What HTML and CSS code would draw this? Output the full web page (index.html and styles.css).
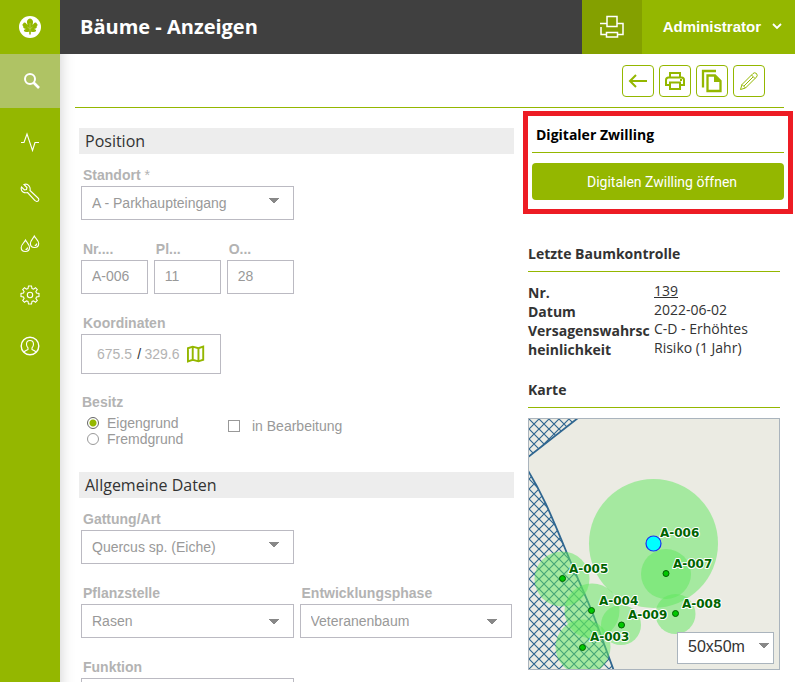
FILE: index.html
```html
<!DOCTYPE html>
<html lang="de">
<head>
<meta charset="utf-8">
<title>Bäume - Anzeigen</title>
<link rel="stylesheet" href="styles.css">
</head>
<body>
<nav class="sidebar" aria-label="Hauptmenü">
  <a class="logo" href="#" aria-label="Startseite">
    <svg width="22" height="22" viewBox="0 0 22 22"><circle cx="11" cy="11" r="11" fill="#fff"/><path d="M11 2.500 C13 3 14.300 4.500 14 6.500 L13.500 9 C14.500 8 15 6.500 16.500 6.500 C18 6.800 17.500 8 18.700 8.700 C18.500 10 17.300 10 17.800 11.200 C17.500 12.700 16 12.500 15 13 C16.300 13.200 17.500 14 17 15 C16 16.200 13.500 16.500 11.800 15.500 V18.500 H10.200 V15.500 C8.500 16.500 6 16.200 5 15 C4.500 14 5.700 13.200 7 13 C6 12.500 4.500 12.700 4.200 11.200 C4.700 10 3.500 10 3.300 8.700 C4.500 8 4 6.800 5.500 6.500 C7 6.500 7.500 8 8.500 9 L8 6.500 C7.700 4.500 9 3 11 2.500 Z" fill="#94b700"/><path d="M11 7 V15 M11 13 L8.500 11 M11 13 L13.500 11" stroke="#b6cf55" stroke-width=".8" fill="none"/></svg>
  </a>
  <a class="search" href="#" aria-label="Suche">
    <svg width="18" height="18" viewBox="0 0 18 18" fill="none" stroke="#fff"><circle cx="7" cy="7" r="5" stroke-width="2"/><path d="M10.500 10.500 L16 16" stroke-width="2.600"/></svg>
  </a>
  <a class="item" href="#" aria-label="Aktivität">
    <svg width="20" height="20" viewBox="0 0 20 20"><path d="M1 10.500 H4 L7 2 L12.500 18.500 L15 10.500 H19"/></svg>
  </a>
  <a class="item" href="#" aria-label="Werkzeuge">
    <svg width="20" height="20" viewBox="0 0 20 20"><path d="M4 1.500 L7 4.500 L6.500 6.500 L4.500 7 L1.500 4 C.800 6 1.500 8 3 9 C4.500 10 6 10 7.500 9.500 L15 17.500 C16 18.700 17.500 18.700 18.300 17.800 C19 17 19 15.800 18 15 L10 7.500 C10.500 5.500 10 4 9 2.800 C7.800 1.300 5.800 .800 4 1.500 Z"/></svg>
  </a>
  <a class="item" href="#" aria-label="Bewässerung">
    <svg width="20" height="20" viewBox="0 0 20 20"><path d="M5.500 6 C7 9 9.500 10.500 9.500 13.500 C9.500 16 7.500 17.500 5.300 17.500 C3 17.500 1.200 16 1.200 13.500 C1.200 10.500 4 9 5.500 6 Z M14.300 2 C16 5 18.700 6.500 18.700 9.500 C18.700 12 16.700 13.500 14.500 13.500 C12.200 13.500 10.400 12 10.400 9.500 C10.400 6.500 12.800 5 14.300 2 Z M5.500 15.500 C6.800 15.500 7.500 14.800 7.500 13.500 M14.700 11.500 C16 11.500 16.700 10.800 16.700 9.500"/></svg>
  </a>
  <a class="item" href="#" aria-label="Einstellungen">
    <svg width="20" height="20" viewBox="0 0 20 20"><circle cx="10" cy="10" r="2.700"/><path d="M8.500 1 H11.500 L12 3.500 L13.500 4.200 L15.500 2.700 L17.300 4.500 L15.900 6.500 L16.500 8 L19 8.500 V11.500 L16.500 12 L15.900 13.500 L17.300 15.500 L15.500 17.300 L13.500 15.900 L12 16.500 L11.500 19 H8.500 L8 16.500 L6.500 15.900 L4.500 17.300 L2.700 15.500 L4.100 13.500 L3.500 12 L1 11.500 V8.500 L3.500 8 L4.100 6.500 L2.700 4.500 L4.500 2.700 L6.500 4.100 L8 3.500 Z"/></svg>
  </a>
  <a class="item" href="#" aria-label="Profil">
    <svg width="20" height="20" viewBox="0 0 20 20"><circle cx="10" cy="10" r="8.800" stroke-width="1.400"/><path d="M10 4.500 C7.700 4.500 6.500 6 6.500 8.300 C6.500 10 7.200 11.200 8 12 V13.500 C6.500 14.200 5 14.500 4 16 M10 4.500 C12.300 4.500 13.500 6 13.500 8.300 C13.500 10 12.800 11.200 12 12 V13.500 C13.500 14.200 15 14.500 16 16"/></svg>
  </a>
</nav>

<div class="page">
  <header class="topbar">
    <h1>Bäume - Anzeigen</h1>
    <button class="top-print" type="button" aria-label="Drucken">
      <svg width="24" height="24" viewBox="0 0 24 24" fill="none" stroke="#fff" stroke-width="1.500"><path d="M7 11.500 V1.500 H17 V11.500 Z M7 8.500 H0 M17 8.500 H23 V19.500 H18 M1 12 V19.500 H6 M6.500 17.500 H17.500 V22 H6.500 Z"/></svg>
    </button>
    <button class="user" type="button">Administrator
      <svg width="10" height="7" viewBox="0 0 10 7" fill="none" stroke="#fff" stroke-width="1.800"><path d="M1 1 L5 5 L9 1"/></svg>
    </button>
  </header>

  <main>
    <div class="toolbar">
      <button type="button" aria-label="Zurück"><svg width="20" height="20" viewBox="0 0 20 20" fill="none" stroke="#94b700" stroke-width="2"><path d="M19 10 H2 M8 4 L2 10 L8 16"/></svg></button>
      <button type="button" aria-label="Drucken"><svg width="22" height="20" viewBox="0 0 22 20" fill="none" stroke="#94b700" stroke-width="2"><path d="M6 6 V2 H16 V6 M6 14 H2 V9 Q2 6.500 4.500 6.500 H17.500 Q20 6.500 20 9 V14 H16 M6 11.500 H16 V18 H6 Z"/><path d="M16 9 H18"/></svg></button>
      <button type="button" aria-label="Kopieren"><svg width="22" height="24" viewBox="0 0 22 24" fill="none" stroke="#94b700" stroke-width="2.300"><path d="M2 18.500 V2 H15"/><path d="M6.500 6.500 H14 L19.500 12 V22 H6.500 Z"/><path d="M13 6 V13 H20 Z" fill="#94b700" stroke="none"/></svg></button>
      <button type="button" aria-label="Bearbeiten"><svg width="20" height="20" viewBox="0 0 20 20" fill="none" stroke="#94b700"><path d="M1.500 18.500 L3 13.500 L14 2.500 Q15.500 1 17.500 2.500 Q19 4.500 17.500 6 L6.500 17 Z M3 13.500 L6.500 17 M12.500 4 L16 7.500 M5 15 L14 6"/></svg></button>
    </div>

    <div class="columns">
      <form class="form">
        <h2>Position</h2>
        <div class="fields">
          <div class="field first">
            <label for="standort">Standort <span class="star">*</span></label>
            <select id="standort" class="box up" disabled><option>A - Parkhaupteingang</option></select>
          </div>
          <div class="triple">
            <div class="field"><label for="nr">Nr....</label><input id="nr" class="box" value="A-006" disabled></div>
            <div class="field"><label for="pl">Pl...</label><input id="pl" class="box" value="11" disabled></div>
            <div class="field"><label for="o">O...</label><input id="o" class="box" value="28" disabled></div>
          </div>
          <div class="triple">
            <div class="field wide">
              <label for="koord-x">Koordinaten</label>
              <div class="coords">
                <input id="koord-x" value="675.5" disabled><span>/</span><input aria-label="Koordinate Y" value="329.6" disabled>
                <svg width="18" height="18" viewBox="0 0 18 18" fill="none" stroke="#94b700" stroke-width="2"><path d="M1 3 L6 1.300 L12 3 L17 1.300 V15 L12 16.700 L6 15 L1 16.700 Z M6 1.300 V15 M12 3 V16.700"/></svg>
              </div>
            </div>
          </div>
          <fieldset class="owner">
            <legend>Besitz</legend>
            <div class="radios">
              <label><input type="radio" name="besitz" checked>Eigengrund</label>
              <label><input type="radio" name="besitz">Fremdgrund</label>
            </div>
            <label class="check"><input type="checkbox">in Bearbeitung</label>
          </fieldset>
        </div>

        <h2>Allgemeine Daten</h2>
        <div class="fields">
          <div class="field first">
            <label for="gattung">Gattung/Art</label>
            <select id="gattung" class="box up" disabled><option>Quercus sp. (Eiche)</option></select>
          </div>
          <div class="field start">
            <label for="pflanz">Pflanzstelle</label>
            <select id="pflanz" class="box" disabled><option>Rasen</option></select>
          </div>
          <div class="field">
            <label for="phase">Entwicklungsphase</label>
            <select id="phase" class="box" disabled><option>Veteranenbaum</option></select>
          </div>
          <div class="field start">
            <label for="funktion">Funktion</label>
            <select id="funktion" class="box" disabled><option></option></select>
          </div>
        </div>
      </form>

      <aside>
        <section class="twin">
          <h3>Digitaler Zwilling</h3>
          <button type="button">Digitalen Zwilling öffnen</button>
        </section>
        <section class="panel">
          <h3>Letzte Baumkontrolle</h3>
          <div class="facts">
            <div class="names"><div>Nr.</div><div>Datum</div><div>Versagenswahrscheinlichkeit</div></div>
            <div class="values"><div><a href="#">139</a></div><div>2022-06-02</div><div>C-D - Erhöhtes Risiko (1 Jahr)</div></div>
          </div>
        </section>
        <section class="panel">
          <h3>Karte</h3>
          <div class="map">
            <svg viewBox="0 0 250 250" role="img" aria-label="Karte der Bäume">
              <defs>
                <pattern id="hatch" width="10" height="10" patternUnits="userSpaceOnUse"><path d="M-1 -1 L11 11 M-1 11 L11 -1" stroke="#2f6690" stroke-width="1.200"/></pattern>
              </defs>
              <rect width="250" height="250" fill="#ebebe3"/>
              <g fill="url(#hatch)" stroke="#2f6690" stroke-width="1.800">
                <path d="M-2 -1 H49 L-2 39 Z"/>
                <path d="M-2 50 C14 76 22 96 35 127 C46 154 56 175 64 195 L85 252 H-2 Z"/>
              </g>
              <g fill="#5fe75d" fill-opacity=".5">
                <circle cx="124.500" cy="124.500" r="64.500"/><circle cx="137" cy="155" r="25"/><circle cx="33" cy="160" r="27.500"/>
                <circle cx="63" cy="192" r="27.500"/><circle cx="54" cy="228" r="27.500"/><circle cx="92" cy="206" r="20"/><circle cx="146.500" cy="195" r="20"/>
              </g>
              <g fill="#00c800" stroke="#006000">
                <circle cx="137" cy="154.500" r="3"/><circle cx="33.500" cy="159.500" r="3"/><circle cx="62.500" cy="191.500" r="3"/>
                <circle cx="53.500" cy="228.500" r="3"/><circle cx="92.500" cy="206" r="3"/><circle cx="146.500" cy="194.500" r="3"/>
              </g>
              <circle cx="124.500" cy="124.500" r="7.500" fill="#00ffff" stroke="#1a2ff0" stroke-width="1.200"/>
              <g class="tags">
                <text x="131" y="118">A-006</text><text x="144" y="149">A-007</text><text x="40" y="154">A-005</text>
                <text x="70" y="186">A-004</text><text x="99" y="200">A-009</text><text x="153" y="189">A-008</text><text x="61" y="222">A-003</text>
              </g>
            </svg>
            <select class="scale" aria-label="Kartenausschnitt"><option>50x50m</option></select>
          </div>
        </section>
      </aside>
    </div>
  </main>
</div>
</body>
</html>
```
FILE: styles.css
```css
* { box-sizing: border-box; }

body {
  margin: 0;
  height: 100vh;
  overflow: hidden;
  display: grid;
  grid-template-columns: 60px 1fr;
  background: #fff;
  color: #333;
  font-family: "Open Sans", sans-serif;
}

h1, h2, h3 { margin: 0; }
button, input, select { font: inherit; margin: 0; }
button { cursor: pointer; }

.sidebar {
  background: #94b700;
  box-shadow: 0 0 14px rgba(0, 0, 0, .2);
}
.sidebar a { display: flex; align-items: center; justify-content: center; }
.sidebar .logo, .sidebar .search { height: 54px; }
.sidebar .search { background: #afc364; margin-bottom: 8px; padding-left: 4px; }
.sidebar .item { height: 51px; }
.item svg { fill: none; stroke: #fff; stroke-width: 1.100; }

.page { min-width: 0; }

.topbar {
  position: relative;
  display: flex;
  height: 54px;
  background: #404040;
}
.topbar h1 {
  flex: 1;
  padding-left: 20px;
  color: #fff;
  font-size: 20px;
  line-height: 54px;
}
.topbar button { border: 0; padding: 0; color: #fff; }
.top-print { width: 60px; background: #84a000; display: grid; place-items: center; }
.topbar .user {
  display: flex;
  align-items: center;
  gap: 11px;
  padding: 0 13px 2px 21px;
  background: #94b700;
  font: bold 15px "Liberation Sans", sans-serif;
}

.toolbar {
  display: flex;
  justify-content: flex-end;
  gap: 5px;
  margin: 0 11px 0 15px;
  padding: 11px 19px 10px 0;
  border-bottom: 1px solid #94b700;
}
.toolbar button {
  display: grid;
  place-items: center;
  width: 32px;
  height: 32px;
  padding: 0;
  border: 1px solid #94b700;
  border-radius: 4px;
  background: #fff;
}

.columns {
  display: grid;
  grid-template-columns: 1fr 270px;
  gap: 9px;
  padding: 3px 2px 0 19px;
}

.form {
  padding-top: 17px;
  font: 14px/16px "Liberation Sans", sans-serif;
  color: #999;
}
.form h2 {
  height: 26px;
  padding-left: 6px;
  background: #ededed;
  color: #333;
  font: 16px/26px "Open Sans", sans-serif;
}
.fields {
  display: grid;
  grid-template-columns: 1fr 1fr;
  column-gap: 6px;
  padding: 0 2px;
}
.field { min-width: 0; padding-top: 21px; }
.field.first { padding-top: 13px; }
.field.first, .field.start, .triple { grid-column: 1; }
.field > label, .owner legend {
  display: block;
  padding: 0 0 3px 2px;
  color: #b3b3b3;
  font-weight: bold;
  white-space: nowrap;
}
.star { font-weight: normal; }
.triple { display: grid; grid-template-columns: repeat(3, 1fr); gap: 6px; }
.wide { grid-column: span 2; }

.box {
  display: block;
  width: 100%;
  height: 34px;
  padding: 0 10px;
  border: 1px solid #bbbac2;
  border-radius: 0;
  background: #fff;
  color: #999;
  opacity: 1;
}
input.box { padding-bottom: 2px; }
select { appearance: none; }

.coords {
  display: flex;
  align-items: center;
  height: 40px;
  padding: 0 15px 1px;
  border: 1px solid #bbbac2;
}
.coords input {
  width: 37px;
  padding: 0;
  border: 0;
  background: none;
  color: #b3b3b3;
}
.coords span { width: 11px; color: #333; text-align: center; }
.coords svg { margin-left: 6px; }

.owner {
  grid-column: 1 / -1;
  display: grid;
  grid-template-columns: 147px 1fr;
  align-items: start;
  margin: 0 0 25px;
  padding: 0;
  border: 0;
}
.owner legend { padding: 20px 0 5px 1px; }
.owner label { display: flex; align-items: center; }
.radios label { gap: 8px; padding-left: 6px; }
.owner .check { gap: 12px; padding-top: 3px; }
.owner input {
  appearance: none;
  width: 12px;
  height: 12px;
  border: 1px solid #999;
  background: #fff;
}
.owner input[type="radio"] { border-radius: 50%; }
.owner input[type="radio"]:checked {
  border-color: #666;
  background: radial-gradient(circle, #94b700 3px, #fff 4px);
}

.twin {
  padding: 9px 4px;
  border: 5px solid #ed1c24;
}
h3 {
  font-size: 14px;
  line-height: 20px;
  border-bottom: 1px solid #94b700;
}
.twin h3 { color: #000; padding: 0 4px 7px; }
.twin button {
  display: block;
  width: 100%;
  height: 37px;
  margin-top: 10px;
  padding: 0 0 0 8px;
  border: 0;
  border-radius: 4px;
  background: #94b700;
  color: #fff;
  font: 14px Roboto, sans-serif;
}

.panel { margin: 0 13px 0 5px; padding-top: 20px; }
.twin + .panel { padding-top: 30px; }
.panel h3 { padding-bottom: 7px; }
.facts {
  display: grid;
  grid-template-columns: 1fr 1fr;
  padding: 9px 0 1px;
  font-size: 14px;
  line-height: 19px;
}
.names {
  padding: 2px 3px 0 0;
  font-weight: bold;
  overflow-wrap: anywhere;
}
.facts a { color: inherit; }

.map { position: relative; margin-top: 10px; border: 1px solid #aab4bd; }
.map svg { display: block; width: 100%; }
.tags {
  fill: #006400;
  stroke: #fff;
  stroke-width: 2px;
  paint-order: stroke;
  stroke-linejoin: round;
  font: bold 12px "DejaVu Sans", sans-serif;
}
.scale {
  position: absolute;
  right: 5px;
  bottom: 5px;
  width: 97px;
  height: 32px;
  padding: 0 10px 4px;
  border: 1px solid #aab4bd;
  border-radius: 0;
  color: #333;
  font: 16px "Liberation Sans", sans-serif;
}
select.box, .scale {
  background:
    linear-gradient(to bottom right, #888 50%, transparent 51%) right 14px center / 5px 5px no-repeat,
    linear-gradient(to bottom left, #888 50%, transparent 51%) right 19px center / 5px 5px no-repeat,
    #fff;
}
select.box.up { background-position: right 14px top 11px, right 19px top 11px, 0 0; }
.scale { background-position: right 4px top 10px, right 9px top 10px, 0 0; }
```
